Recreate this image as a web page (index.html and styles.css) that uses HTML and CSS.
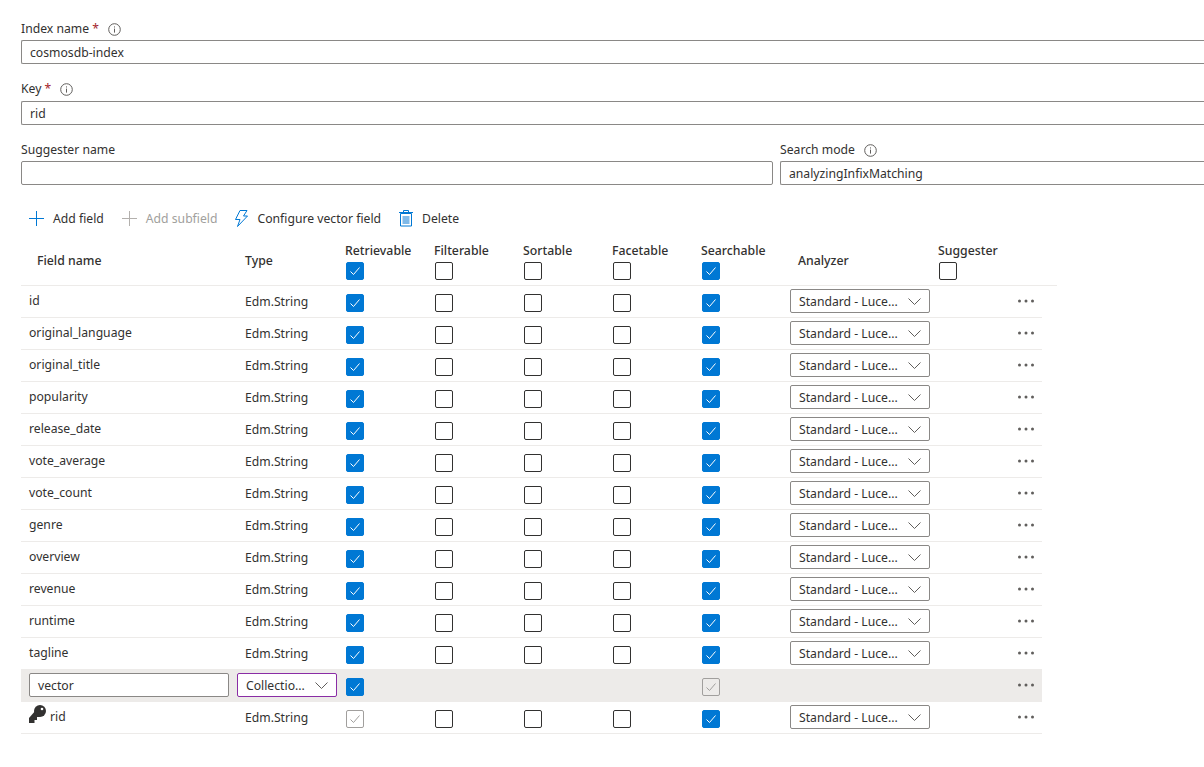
FILE: index.html
```html
<!DOCTYPE html>
<html lang="en">
<head>
  <meta charset="UTF-8">
  <title>Create index</title>
  <link rel="stylesheet" href="styles.css">
</head>
<body>
  <svg class="defs" width="0" height="0">
    <symbol id="info" viewBox="0 0 13 13"><circle cx="6.500" cy="6.500" r="5.800" fill="none" stroke="#605e5c"/><path d="M6.500 5.600v4M6.500 3.400v1.100" stroke="#605e5c"/></symbol>
    <symbol id="chev" viewBox="0 0 13 7"><path d="M.5.500l6 6 6-6" fill="none" stroke="#605e5c"/></symbol>
    <symbol id="tick" viewBox="0 0 16 16"><path d="M3.500 8.500l3 3 6-7" fill="none" stroke="currentColor"/></symbol>
    <symbol id="dots" viewBox="0 0 18 4"><circle cx="2.500" cy="2" r="1.500"/><circle cx="9" cy="2" r="1.500"/><circle cx="15.500" cy="2" r="1.500"/></symbol>
  </svg>

  <div class="page">
    <div class="field">
      <div class="label">Index name <span class="req">*</span><svg class="info"><use href="#info"/></svg></div>
      <div class="input open">cosmosdb-index</div>
    </div>
    <div class="field key-field">
      <div class="label">Key <span class="req">*</span><svg class="info"><use href="#info"/></svg></div>
      <div class="input open">rid</div>
    </div>
    <div class="field-row">
      <div class="field">
        <div class="label">Suggester name</div>
        <div class="input"></div>
      </div>
      <div class="field">
        <div class="label">Search mode<svg class="info"><use href="#info"/></svg></div>
        <div class="input open">analyzingInfixMatching</div>
      </div>
    </div>

    <div class="toolbar">
      <span class="tool"><svg width="15" height="15" viewBox="0 0 15 15"><path d="M7.500 0v15M0 7.500h15" stroke="#0078d4"/></svg>Add field</span>
      <span class="tool off"><svg width="15" height="15" viewBox="0 0 15 15"><path d="M7.500 0v15M0 7.500h15" stroke="#b3b0ad"/></svg>Add subfield</span>
      <span class="tool"><svg width="13" height="17" viewBox="0 0 13 17"><path d="M5 .5h7L8.500 6H12.500L2.500 16.500 5 9.500H.5z" fill="none" stroke="#0078d4"/></svg>Configure vector field</span>
      <span class="tool"><svg width="14" height="17" viewBox="0 0 14 17"><path d="M1.500 3.500h11V16h-11z" fill="#fff" stroke="#0078d4"/><path d="M3.500 6h7v8h-7z" fill="#7fb9e8"/><path d="M0 2.500h14M4.500 2.500V.5h5v2" fill="none" stroke="#0078d4"/></svg>Delete</span>
    </div>

    <div class="table" id="table">
      <div class="head">
        <div class="hname">Field name</div>
        <div class="htype">Type</div>
        <div class="hcheck">Retrievable<span class="box on"><svg><use href="#tick"/></svg></span></div>
        <div class="hcheck">Filterable<span class="box"></span></div>
        <div class="hcheck">Sortable<span class="box"></span></div>
        <div class="hcheck">Facetable<span class="box"></span></div>
        <div class="hcheck">Searchable<span class="box on"><svg><use href="#tick"/></svg></span></div>
        <div class="hanalyzer">Analyzer</div>
        <div class="hcheck">Suggester<span class="box"></span></div>
      </div>
    </div>
  </div>
  <script src="rows.js"></script>
</body>
</html>
```

FILE: rows.js
```js
var names = ["id", "original_language", "original_title", "popularity", "release_date", "vote_average",
  "vote_count", "genre", "overview", "revenue", "runtime", "tagline"];
var tick = '<svg><use href="#tick"/></svg>';
var on = '<span class="box on">' + tick + '</span>';
var off = '<span class="box"></span>';
var grey = '<span class="box dis">' + tick + '</span>';
var more = '<div class="more"><svg width="18" height="4"><use href="#dots"/></svg></div>';
var chev = '<svg class="chev"><use href="#chev"/></svg>';
var analyzer = '<div class="cell"><div class="select">Standard - Luce...' + chev + '</div></div>';

function cell(html) {
  return '<div class="cell">' + html + '</div>';
}

function stringRow(name, first) {
  return '<div class="row">' +
    '<div class="name">' + name + '</div>' +
    '<div class="type">Edm.String</div>' +
    cell(first) + cell(off) + cell(off) + cell(off) + cell(on) +
    analyzer + '<div></div>' + more + '</div>';
}

var html = names.map(function (n) { return stringRow(n, on); }).join("");

html += '<div class="row vector">' +
  '<div class="name"><div class="input small">vector</div></div>' +
  '<div class="type"><div class="select purple">Collectio...' + chev + '</div></div>' +
  cell(on) + '<div></div><div></div><div></div>' + cell(grey) +
  '<div></div><div></div>' + more + '</div>';

var key = '<svg class="key" width="17" height="18" viewBox="0 0 17 18">' +
  '<circle cx="11" cy="6" r="6" fill="#323130"/>' +
  '<path d="M7 5L0 13v5h5.500v-3H8v-3h3z" fill="#323130"/>' +
  '<circle cx="13" cy="4" r="1.300" fill="#fff"/></svg>';
html += stringRow(key + 'rid', grey);

document.getElementById("table").insertAdjacentHTML("beforeend", html);
```

FILE: styles.css
```css
* {
  box-sizing: border-box;
}

html, body {
  margin: 0;
  padding: 0;
  overflow: hidden;
  background: #fff;
}

body {
  font-family: 'Noto Sans', sans-serif;
  font-size: 12.2px;
  color: #323130;
  height: 767px;
}

.defs {
  position: absolute;
}

.page {
  padding: 18px 0 0 21px;
}

.field {
  margin-bottom: 14px;
}

.label {
  height: 22px;
  line-height: 20px;
  display: flex;
  align-items: center;
  white-space: pre;
}

.key-field .label {
  margin-bottom: 1px;
}

.req {
  color: #a4262c;
}

.info {
  width: 13px;
  height: 13px;
  margin-left: 9px;
}

.input {
  height: 24px;
  line-height: 23px;
  padding: 0 8px;
  border: 1px solid #8a8886;
  border-radius: 2px;
  background: #fff;
}

.input.open {
  border-right: none;
  border-radius: 2px 0 0 2px;
}

.field-row {
  display: grid;
  grid-template-columns: 752px 1fr;
  column-gap: 7px;
}

.toolbar {
  display: flex;
  align-items: center;
  height: 24px;
  margin: 7px 0 6px 8px;
}

.tool {
  display: flex;
  align-items: center;
  margin-right: 18px;
  white-space: nowrap;
}

.tool svg {
  margin-right: 9px;
}

.tool.off {
  color: #a19f9d;
}

.head, .row {
  display: grid;
  grid-template-columns: 224px 100px 89px 89px 89px 89px 89px 148px 79px 25px;
}

.head {
  width: 1036px;
  height: 50px;
  border-bottom: 1px solid #edebe9;
  align-items: center;
}

.head > div {
  font-size: 12.3px;
  font-weight: 500;
}

.hname {
  padding-left: 16px;
}

.hanalyzer {
  padding-left: 8px;
}

.hcheck {
  display: flex;
  flex-direction: column;
  gap: 1px;
  white-space: nowrap;
}

.row {
  width: 1021px;
  height: 32px;
  border-bottom: 1px solid #edebe9;
  align-items: center;
}

.row.vector {
  background: #edebe9;
}

.name {
  padding-left: 8px;
  padding-bottom: 3px;
  display: flex;
  align-items: center;
}

.vector .name {
  padding-bottom: 2px;
}

.cell {
  display: flex;
}

.box {
  display: block;
  width: 18px;
  height: 18px;
  margin: 2px 0 0 1px;
  border: 1px solid #323130;
  border-radius: 2px;
}

.box svg {
  display: block;
  width: 16px;
  height: 16px;
}

.box.on {
  background: #0078d4;
  border-color: #0078d4;
  color: #fff;
}

.box.dis {
  border-color: #a19f9d;
  color: #a19f9d;
}

.select {
  display: flex;
  align-items: center;
  justify-content: space-between;
  width: 140px;
  height: 24px;
  margin-bottom: 2px;
  padding: 1px 8px 0;
  border: 1px solid #8a8886;
  border-radius: 2px;
  background: #fff;
  white-space: nowrap;
}

.select.purple {
  width: 100px;
  margin-left: -8px;
  border-color: #8a2da5;
}

.chev {
  width: 13px;
  height: 7px;
  flex: none;
}

.input.small {
  width: 200px;
}

.more {
  display: flex;
  padding-bottom: 2px;
  fill: #605e5c;
}

.key {
  flex: none;
  margin-right: 4px;
  margin-top: -4px;
}
```
